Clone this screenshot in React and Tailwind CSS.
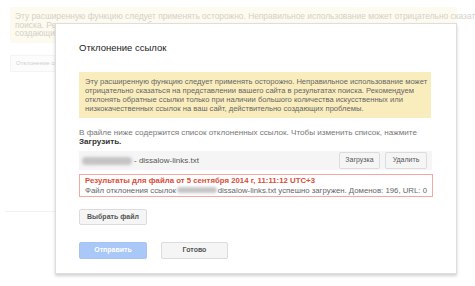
import React from "react";

const font = { fontFamily: '"Liberation Sans", Arial, sans-serif' };

function GrayButton({ children, className = "" }) {
    return (
        <div
            className={`flex items-center justify-center rounded-[2px] border border-[#dcdcdc] bg-[#f5f5f5] text-[7px] font-bold text-[#555] ${className}`}
        >
            {children}
        </div>
    );
}

function Blur({ className = "" }) {
    return <span className={`inline-block rounded-full bg-[#c4c4c4] blur-[1.5px] ${className}`} />;
}

export default function App() {
    return (
        <div className="relative h-[286px] w-[475px] overflow-hidden bg-white" style={font}>
            <div className="ml-[10px] mt-[7px] h-[36px] w-[447px] bg-[#fdfaef] px-[5px] pt-[5px] text-[8.4px] leading-[8.5px] text-[#d4d1c8]">
                <div className="whitespace-nowrap">
                    Эту расширенную функцию следует применять осторожно. Неправильное использование может отрицательно сказаться на
                </div>
                <div className="whitespace-nowrap">поиска. Рекомендуем отклонять обратные ссылки</div>
                <div className="whitespace-nowrap">создающих проблемы.</div>
            </div>
            <div className="ml-[10px] mt-[12px] flex h-[17px] w-[70px] items-center border border-[#f4f4f4] bg-[#fcfcfc] pl-[5px] text-[6px] text-[#d0d0d0]">
                Отклонение ссылок
            </div>
            <div className="ml-[5px] mt-[139px] h-px w-[60px] bg-[#f2f2f2]" />

            {/* Dialog */}
            <div className="absolute left-[55px] top-[23px] h-[251px] w-[402px] border border-[#dedede] bg-white pl-[23px] pt-[18px] shadow-[0_2px_3px_rgba(0,0,0,0.18)]">
                <div className="text-[9.5px] leading-[12px] text-[#222]">Отклонение ссылок</div>

                <div className="mt-[18px] w-[352px] bg-[#f9edbe] px-[6px] py-[5px] text-[7.6px] leading-[9px] text-[#666]">
                    <div className="whitespace-nowrap">
                        Эту расширенную функцию следует применять осторожно. Неправильное использование может
                    </div>
                    <div className="whitespace-nowrap">
                        отрицательно сказаться на представлении вашего сайта в результатах поиска. Рекомендуем
                    </div>
                    <div className="whitespace-nowrap">
                        отклонять обратные ссылки только при наличии большого количества искусственных или
                    </div>
                    <div className="whitespace-nowrap">
                        низкокачественных ссылок на ваш сайт, действительно создающих проблемы.
                    </div>
                </div>

                <div className="mt-[10px] text-[8.1px] leading-[9px] text-[#777]">
                    <div className="whitespace-nowrap">
                        В файле ниже содержится список отклоненных ссылок. Чтобы изменить список, нажмите
                    </div>
                    <div className="font-bold text-[#333]">Загрузить.</div>
                </div>

                {/* File row */}
                <div className="mt-[5px] flex h-[19px] w-[353px] items-center bg-[#f5f5f5] pl-[3px] pr-[5px]">
                    <Blur className="h-[8px] w-[50px]" />
                    <span className="ml-[2px] text-[8px] text-[#555]">- dissalow-links.txt</span>
                    <div className="ml-auto flex gap-[5px]">
                        <GrayButton className="h-[17px] w-[41px] font-normal">Загрузка</GrayButton>
                        <GrayButton className="h-[17px] w-[42px] font-normal">Удалить</GrayButton>
                    </div>
                </div>

                {/* Result */}
                <div className="mt-[4px] w-[354px] border border-[#f3a9a2] px-[5px] py-px text-[7.8px] leading-[9.5px]">
                    <div className="whitespace-nowrap font-bold text-[#dd4b39]">
                        Результаты для файла от 5 сентября 2014 г, 11:11:12 UTC+3
                    </div>
                    <div className="flex items-center whitespace-nowrap text-[#666]">
                        <span>Файл отклонения ссылок</span>
                        <Blur className="mx-[1px] h-[6px] w-[52px]" />
                        <span>dissalow-links.txt успешно загружен. Доменов: 196, URL: 0</span>
                    </div>
                </div>

                <GrayButton className="mt-[12px] h-[16px] w-[68px]">Выбрать файл</GrayButton>

                <div className="mt-[17px] flex gap-[14px]">
                    <div className="flex h-[17px] w-[68px] items-center justify-center rounded-[2px] border border-[#a5c3f3] bg-[#a9c7f7] text-[7px] font-bold text-white">
                        Отправить
                    </div>
                    <GrayButton className="h-[17px] w-[67px]">Готово</GrayButton>
                </div>
            </div>
        </div>
    );
}
